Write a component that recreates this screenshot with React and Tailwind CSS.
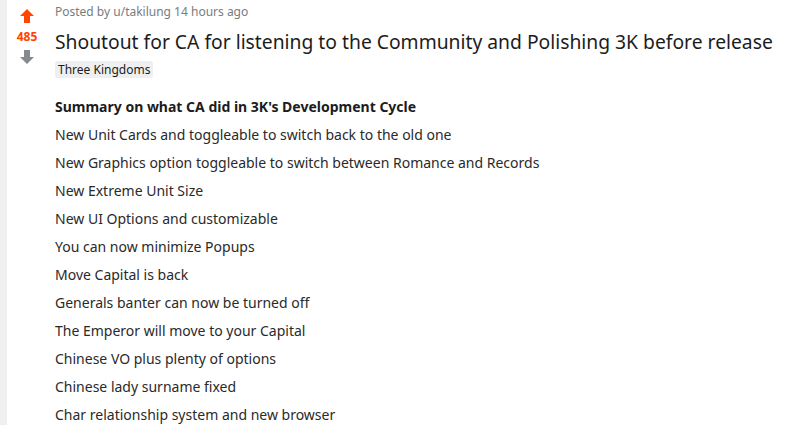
import React from "react";

const Arrow = ({ up, color }) => (
  <svg width="14" height="14" viewBox="0 0 14 14" className={up ? "" : "rotate-180"}>
    <polygon points="7,0 14,7 10,7 10,14 4,14 4,7 0,7" fill={color} />
  </svg>
);

const items = [
  "New Unit Cards and toggleable to switch back to the old one",
  "New Graphics option toggleable to switch between Romance and Records",
  "New Extreme Unit Size",
  "New UI Options and customizable",
  "You can now minimize Popups",
  "Move Capital is back",
  "Generals banter can now be turned off",
  "The Emperor will move to your Capital",
  "Chinese VO plus plenty of options",
  "Chinese lady surname fixed",
  "Char relationship system and new browser",
];

export default function App() {
  return (
    <div className="flex w-[794px] h-[425px] overflow-hidden bg-white" style={{ fontFamily: '"Noto Sans", sans-serif' }}>
      <div className="w-[7px] shrink-0 bg-[#f0f0f0]" />
      <div className="w-[40px] shrink-0 flex flex-col items-center pt-[9px]">
        <Arrow up color="#ff4500" />
        <div className="text-[12px] leading-[16px] font-bold text-[#ff4500] mt-[6px]">485</div>
        <div className="mt-[5px]">
          <Arrow color="#878a8c" />
        </div>
      </div>
      <div className="pl-[8px] pt-[4px] flex-1">
        <div className="text-[12px] leading-[16px] text-[#787c7e]">Posted by u/takilung 14 hours ago</div>
        <h1 className="text-[19.3px] leading-[27px] font-normal text-[#1c1c1c] mt-[8px] whitespace-nowrap">
          Shoutout for CA for listening to the Community and Polishing 3K before release
        </h1>
        <div className="mt-[6px] w-fit bg-[#edeff1] text-[#1c1c1c] text-[12px] leading-[15px] px-[3px] py-[1px] rounded-[2px]">
          Three Kingdoms
        </div>
        <div className="mt-[18px] text-[14px] leading-[21px] text-[#1c1c1c] font-bold">
          Summary on what CA did in 3K's Development Cycle
        </div>
        <div className="flex flex-col gap-[7px] mt-[7px]">
          {items.map((t) => (
            <p key={t} className="text-[14px] leading-[21px] text-[#2a2a2a]">{t}</p>
          ))}
        </div>
      </div>
    </div>
  );
}
